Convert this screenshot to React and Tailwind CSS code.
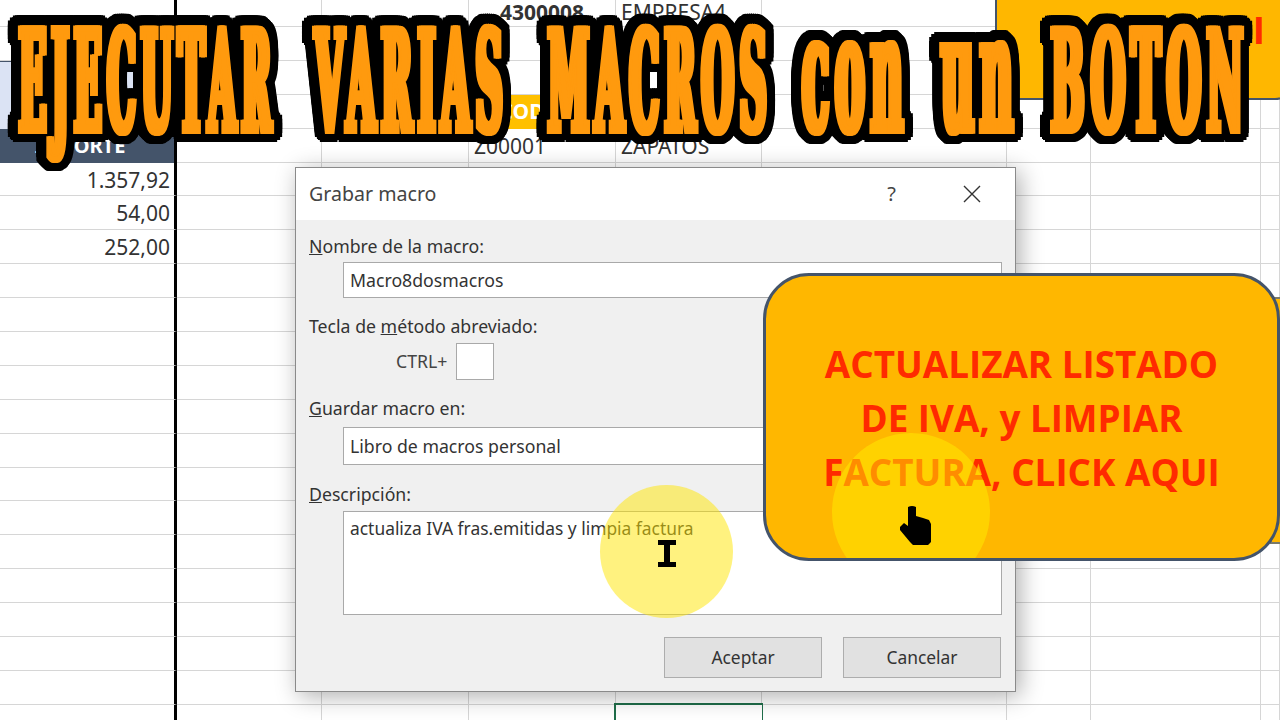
const colWidths = ['w-[177px]', 'w-[145px]', 'w-[147px]', 'w-[147px]', 'w-[146px]', 'w-[245px]', 'w-[84px]', 'w-[170px]', 'w-[19px]'];

const textCls = 'text-[21px] leading-none text-[#333] whitespace-nowrap';

const Cell = ({ col, className = 'border-b border-[#d6d6d6]', children }) => (
  <div className={`${colWidths[col]} shrink-0 flex items-center border-r ${col === 0 ? 'border-r-[3px] border-r-black' : 'border-r-[#d6d6d6]'} ${className}`}>
    {children}
  </div>
);

const specialCells = {
  '0-3': { className: 'border-b border-[#d6d6d6] justify-center', text: '4300008', textClass: 'font-bold -mt-[2px]' },
  '0-4': { className: 'border-b border-[#d6d6d6] pl-[5px]', text: 'EMPRESA4', textClass: '-mt-[2px]' },
  '2-0': { className: 'bg-[#dbe3f4] border-t border-[#44546a]' },
  '3-0': { className: 'bg-[#dbe3f4]' },
  '3-3': { className: 'bg-[#ffc000] justify-center', text: 'CODIGO', textClass: 'font-bold !text-white' },
  '4-0': { className: 'bg-[#44546a] justify-center pr-[14px]', text: 'IMPORTE', textClass: 'font-bold !text-white !text-[20px]' },
  '4-3': { className: 'border-b border-[#d6d6d6] pl-[5px]', text: 'Z00001', textClass: 'mt-[2px]' },
  '4-4': { className: 'border-b border-[#d6d6d6] pl-[5px]', text: 'ZAPATOS', textClass: 'mt-[2px]' },
  '5-0': { className: 'border-b border-[#d6d6d6] justify-end pr-[4px]', text: '1.357,92', textClass: 'mt-[2px]' },
  '6-0': { className: 'border-b border-[#d6d6d6] justify-end pr-[4px]', text: '54,00', textClass: 'mt-[2px]' },
  '7-0': { className: 'border-b border-[#d6d6d6] justify-end pr-[4px]', text: '252,00', textClass: 'mt-[2px]' },
  '21-4': { className: 'border-2 !border-[#1f6e4a] !w-[149px] -ml-[2px] -mr-[1px] -mt-[2px]' },
};

const Sheet = () => (
  <div className="flex flex-col h-[720px] overflow-hidden">
    {Array.from({ length: 22 }, (_, r) => (
      <div key={r} className={`flex shrink-0 ${r === 0 ? 'h-[27px]' : 'h-[33.9px]'}`}>
        {colWidths.map((_, c) => {
          const s = specialCells[`${r}-${c}`] ?? {};
          return (
            <Cell key={c} col={c} className={s.className}>
              {s.text && <span className={`${textCls} ${s.textClass ?? ''}`}>{s.text}</span>}
            </Cell>
          );
        })}
      </div>
    ))}
  </div>
);

const Field = ({ className, children }) => (
  <div className={`ml-[34px] flex items-center bg-white border border-[#a9a9a9] pl-[6px] text-[#333] ${className}`}>{children}</div>
);

const Label = ({ children, className = '' }) => (
  <div className={`h-[16px] flex items-center whitespace-pre text-[#333] leading-none ${className}`}><span>{children}</span></div>
);

const Dialog = () => (
  <div className="absolute left-[295px] top-[167px] w-[721px] h-[525px] flex flex-col border border-[#8a8a8a] shadow-[4px_4px_22px_rgba(0,0,0,0.32)] font-['Noto_Sans',sans-serif] text-[17.7px]">
    <div className="h-[52px] shrink-0 bg-white flex items-center pl-[13px] pr-[33px]">
      <span className="text-[19.6px] text-[#444]">Grabar macro</span>
      <span className="ml-auto mr-[66px] text-[20px] text-[#444]">?</span>
      <svg width="20" height="20" viewBox="0 0 20 20" fill="none" stroke="#333" strokeWidth="1.4">
        <path d="M2 2 L18 18 M18 2 L2 18" />
      </svg>
    </div>
    <div className="flex-1 bg-[#f0f0f0] flex flex-col pl-[13px] pr-[13px]">
      <Label className="mt-[19px]"><u>N</u>ombre de la macro:</Label>
      <Field className="h-[36px] mt-[7px]">Macro8dosmacros</Field>
      <Label className="mt-[21px]">Tecla de <u>m</u>étodo abreviado:</Label>
      <div className="flex items-center h-[37px] mt-[8px] ml-[87px]">
        <span className="text-[#444]">CTRL+</span>
        <div className="w-[38px] h-[37px] ml-[9px] bg-white border border-[#a9a9a9]" />
      </div>
      <Label className="mt-[21px]"><u>G</u>uardar macro en:</Label>
      <Field className="h-[38px] mt-[10px]">Libro de macros personal</Field>
      <Label className="mt-[22px]"><u>D</u>escripción:</Label>
      <Field className="h-[104px] mt-[8px] !items-start pt-[3px] text-[17.4px]">actualiza IVA fras.emitidas y limpia factura</Field>
      <div className="flex justify-end gap-[21px] mt-[22px] mr-[1px] text-[17.4px]">
        <button className="w-[158px] h-[41px] bg-[#e1e1e1] border border-[#adadad] text-[#333]">Aceptar</button>
        <button className="w-[158px] h-[41px] bg-[#e1e1e1] border border-[#adadad] text-[#333]">Cancelar</button>
      </div>
    </div>
    <div className="absolute left-[304px] top-[317px] w-[133px] h-[133px] rounded-full bg-[#ffe600]/50" />
    <svg className="absolute left-[362px] top-[372px]" width="18" height="27" viewBox="0 0 18 27" fill="#000">
      <path d="M0 0 H18 V5 H12 V22 H18 V27 H0 V22 H6 V5 H0 Z" />
    </svg>
  </div>
);

const ClickBox = () => (
  <div className="absolute left-[763px] top-[273px] w-[517px] h-[288px] rounded-[46px] border-[3px] border-[#44546a] bg-[#ffb700] overflow-hidden flex flex-col items-center justify-center font-['Open_Sans',sans-serif] font-bold text-[#ff2a00] text-[36.8px] leading-[54px] whitespace-nowrap">
    <span className="mt-[2px]">ACTUALIZAR LISTADO</span>
    <span>DE IVA, y LIMPIAR</span>
    <span>FACTURA, CLICK AQUI</span>
    <div className="absolute left-[66px] top-[157px] w-[158px] h-[158px] rounded-full bg-[#ffee00]/50" />
    <svg className="absolute left-[134px] top-[229px]" width="32" height="40" viewBox="0 0 32 40" fill="#000">
      <path d="M8 2 Q12 0 16 2 V11 L23 13 L29 15 L31 19 V37 L28 40 H13 L10 37 L0 25 V22 L4 18 L8 21 Z" />
    </svg>
  </div>
);

const Word = ({ width, className, children }) => (
  <span className={`shrink-0 inline-block whitespace-nowrap origin-left ${width} ${className}`}>{children}</span>
);

const Title = () => (
  <div className="absolute left-[19px] -top-[7px] h-[160px] flex items-baseline whitespace-nowrap font-['DejaVu_Serif',serif] font-bold tracking-[22px] text-[#ff9a0e] leading-[160px] text-[140px] [-webkit-text-stroke:6px_#ff9a0e] [filter:drop-shadow(2px_0_0_#ff9a0e)_drop-shadow(-2px_0_0_#ff9a0e)_drop-shadow(4px_0_0_#000)_drop-shadow(-4px_0_0_#000)_drop-shadow(0_4px_0_#000)_drop-shadow(0_-4px_0_#000)_drop-shadow(2.5px_2.5px_0_#000)_drop-shadow(-2.5px_-2.5px_0_#000)_drop-shadow(2.5px_-2.5px_0_#000)_drop-shadow(-2.5px_2.5px_0_#000)]">
    <Word width="w-[257px] mr-[39px]" className="scale-x-[.255]">EJECUTAR</Word>
    <Word width="w-[192px] mr-[41px]" className="scale-x-[.265]">VARIAS</Word>
    <Word width="w-[217px] mr-[37px]" className="scale-x-[.265]">MACROS</Word>
    <Word width="w-[102px] mr-[37px]" className="scale-x-[.27] text-[165px]">con</Word>
    <Word width="w-[73px] mr-[37px]" className="scale-x-[.275] text-[165px]">un</Word>
    <Word width="w-[192px]" className="scale-x-[.28]">BOTON</Word>
  </div>
);

export default function App() {
  return (
    <div className="relative w-[1280px] h-[720px] overflow-hidden bg-white font-['Noto_Sans',sans-serif]">
      <Sheet />
      <div className="absolute left-[995px] -top-[20px] w-[300px] h-[120px] rounded-[20px] border-2 border-[#44546a] bg-[#ffb700] flex items-start justify-end pr-[28px] pt-[28px]">
        <span className="text-[37px] leading-[40px] font-bold text-[#ff2a00] font-['Open_Sans',sans-serif]">I</span>
      </div>
      <div className="absolute left-[1270px] top-[297px] w-[20px] h-[247px] border-2 border-[#7a7a6a] bg-[#ffb700]" />
      <Dialog />
      <ClickBox />
      <Title />
    </div>
  );
}
